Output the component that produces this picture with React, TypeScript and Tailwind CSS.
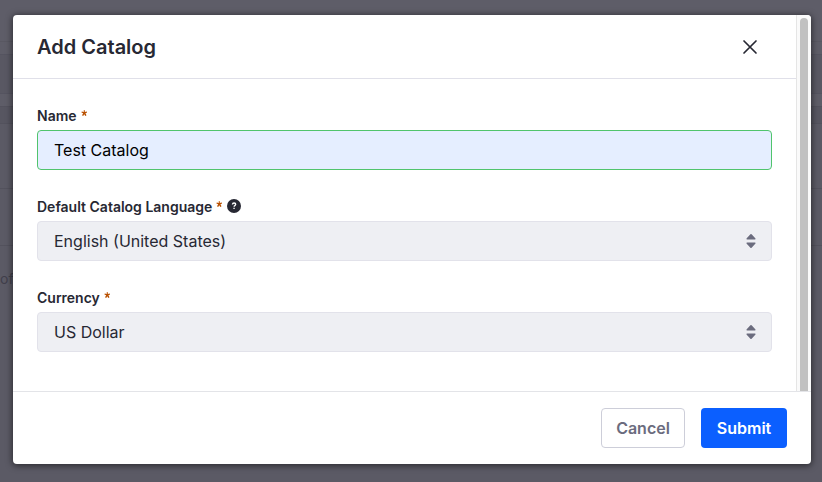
import type { ReactNode } from 'react';

function Asterisk() {
  return (
    <svg className="mb-[5px] ml-1 h-[7px] w-[7px] text-[#b95000]" viewBox="0 0 7 7" fill="currentColor">
      <path d="M2.7.2h1.2l-.1 1.7 2-.4.3 1.1-1.7.7 1.1 1.9-1.2.8-1.1-1.8L2.2 6 1 5.200 2.200 3.300.4 2.600.8 1.500l2 .4z" />
    </svg>
  );
}

function Help() {
  return (
    <svg className="mb-[3px] ml-1 h-3.5 w-3.5" viewBox="0 0 14 14" fill="none">
      <circle cx="7" cy="7" r="7" fill="#272833" />
      <path d="M5.400 5.500C5.500 4.500 6.100 4 7.100 4c1 0 1.600.5 1.600 1.300 0 1.200-1.600 1.200-1.600 2.500" stroke="#fff" strokeWidth="1.300" />
      <rect x="6.400" y="8.700" width="1.300" height="1.300" fill="#fff" />
    </svg>
  );
}

function Field({ label, help, children }: { label: ReactNode; help?: boolean; children: ReactNode }) {
  return (
    <div className="mb-6 h-[67px]">
      <div className="flex h-[27px] items-center pb-px text-sm font-semibold text-[#272833]">
        {label}
        <Asterisk />
        {help && <Help />}
      </div>
      {children}
    </div>
  );
}

function Select({ children }: { children: ReactNode }) {
  return (
    <div className="flex h-10 items-center justify-between rounded border border-[#e2e2ea] bg-[#eeeff3] pr-[15px] pl-4 text-[#272833]">
      {children}
      <svg className="h-4 w-2.5" viewBox="0 0 10 16" fill="#6b6c7e">
        <path d="M4.400 1.300q.6-.6 1.200 0L9.500 5.600q.3.900-.6.900H1.100Q.2 6.500.5 5.600zM4.400 14.700q.6.600 1.200 0l3.900-4.300q.3-.9-.6-.9H1.100q-.9 0-.6.900z" />
      </svg>
    </div>
  );
}

function Backdrop() {
  return (
    <div className="absolute inset-0 flex flex-col">
      <div className="h-[42px] border-b border-[#595862] bg-[#5e5d68]" />
      <div className="h-3 bg-[#5e5d68]" />
      <div className="h-10 border-y border-[#555460] bg-[#595863]" />
      <div className="h-3 bg-[#5e5d68]" />
      <div className="h-[18px] border-y border-[#53525d] bg-[#575661]" />
      <div className="h-[65px] border-b border-[#53525d] bg-[#5b5a65]" />
      <div className="h-[57px] border-b border-[#53525d] bg-[#5b5a65]" />
      <div className="flex-1 bg-[#5b5a65] pt-[23px] text-sm leading-5 text-[#413f4b]">of</div>
    </div>
  );
}

export default function App() {
  return (
    <div className="relative h-[482px] w-[822px] overflow-hidden pt-[15px] pl-[13px] font-['Inter',sans-serif] text-base">
      <Backdrop />
      <div className="relative flex h-[449px] w-[798px] flex-col overflow-hidden rounded bg-white shadow-[0_1px_6px_1px_rgba(0,0,0,0.5)]">
        <div className="flex h-[376px]">
          <div className="w-[783px]">
            <header className="flex h-16 items-center justify-between border-b border-[#e0e0e9] pr-[38px] pl-6">
              <h1 className="text-xl font-semibold text-[#272833]">Add Catalog</h1>
              <svg className="h-4 w-4" viewBox="0 0 16 16" fill="none" stroke="#272833" strokeWidth="1.700" strokeLinecap="round">
                <path d="M2 2l12 12M14 2L2 14" />
              </svg>
            </header>
            <div className="px-6 pt-6">
              <Field label="Name">
                <div className="flex h-10 items-center rounded border border-[#50c46c] bg-[#e5eeff] px-4 text-black">Test Catalog</div>
              </Field>
              <Field label="Default Catalog Language" help>
                <Select>English (United States)</Select>
              </Field>
              <Field label="Currency">
                <Select>US Dollar</Select>
              </Field>
            </div>
          </div>
          <div className="w-[15px] border-l border-[#e5e5e5] bg-[#fafafa] pt-[3px] pl-[3px]">
            <div className="h-full w-2 rounded-t-full bg-[#c1c1c1]" />
          </div>
        </div>
        <footer className="flex flex-1 items-center justify-end gap-4 border-t border-[#e3e4e8] pr-6 font-semibold">
          <button className="h-10 w-[84px] rounded border border-[#cdced9] text-[#6b6c7e]">Cancel</button>
          <button className="h-10 w-[86px] rounded bg-[#0b5fff] text-white">Submit</button>
        </footer>
      </div>
    </div>
  );
}
